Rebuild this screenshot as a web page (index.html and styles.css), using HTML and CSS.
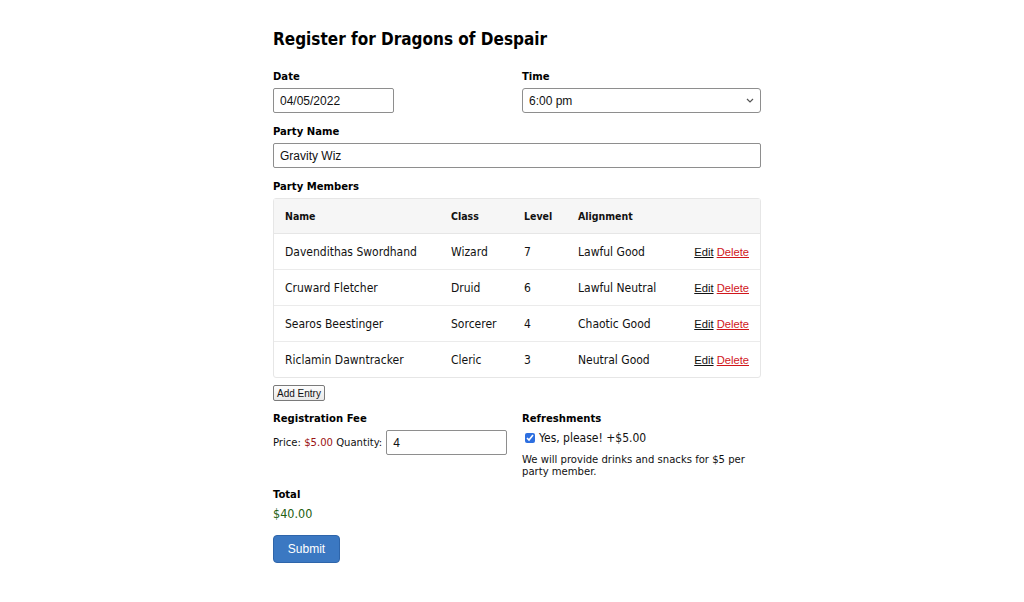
FILE: index.html
```html
<!DOCTYPE html>
<html lang="en">
<head>
<meta charset="utf-8">
<title>Register for Dragons of Despair</title>
<link rel="stylesheet" href="styles.css">
</head>
<body>
<form class="form">
  <h1 class="title">Register for Dragons of Despair</h1>

  <div class="row">
    <div class="field">
      <label class="label">Date</label>
      <input class="input input-short" type="text" value="04/05/2022">
    </div>
    <div class="field">
      <label class="label">Time</label>
      <div class="select-wrap">
        <select class="input select">
          <option>6:00 pm</option>
        </select>
        <svg class="chevron" width="8" height="5" viewBox="0 0 8 5"><path d="M1 1 L4 4 L7 1" fill="none" stroke="#555" stroke-width="1.2"/></svg>
      </div>
    </div>
  </div>

  <div class="field">
    <label class="label">Party Name</label>
    <input class="input" type="text" value="Gravity Wiz">
  </div>

  <div class="field">
    <label class="label">Party Members</label>
    <table class="members">
      <thead>
        <tr><th class="c-name">Name</th><th class="c-class">Class</th><th class="c-level">Level</th><th class="c-align">Alignment</th><th class="c-act"></th></tr>
      </thead>
      <tbody>
        <tr><td>Davendithas Swordhand</td><td>Wizard</td><td>7</td><td>Lawful Good</td><td class="c-act"><a class="edit" href="#">Edit</a> <a class="delete" href="#">Delete</a></td></tr>
        <tr><td>Cruward Fletcher</td><td>Druid</td><td>6</td><td>Lawful Neutral</td><td class="c-act"><a class="edit" href="#">Edit</a> <a class="delete" href="#">Delete</a></td></tr>
        <tr><td>Searos Beestinger</td><td>Sorcerer</td><td>4</td><td>Chaotic Good</td><td class="c-act"><a class="edit" href="#">Edit</a> <a class="delete" href="#">Delete</a></td></tr>
        <tr><td>Riclamin Dawntracker</td><td>Cleric</td><td>3</td><td>Neutral Good</td><td class="c-act"><a class="edit" href="#">Edit</a> <a class="delete" href="#">Delete</a></td></tr>
      </tbody>
    </table>
    <div class="add-row"><button type="button" class="add-btn">Add Entry</button></div>
  </div>

  <div class="row">
    <div class="field">
      <label class="label">Registration Fee</label>
      <div class="price-line">
        <span class="price-text">Price: <span class="price">$5.00</span> Quantity:</span>
        <input class="input input-short" type="text" value="4">
      </div>
    </div>
    <div class="field">
      <label class="label">Refreshments</label>
      <label class="check"><input type="checkbox" checked> <span>Yes, please! +$5.00</span></label>
      <p class="note">We will provide drinks and snacks for $5 per party member.</p>
    </div>
  </div>

  <div class="field total">
    <label class="label">Total</label>
    <div class="total-value">$40.00</div>
  </div>

  <button type="button" class="submit">Submit</button>
</form>
</body>
</html>
```

FILE: styles.css
```css
html, body {
  margin: 0;
  padding: 0;
  background: #fff;
}

body {
  font-family: "DejaVu Sans Condensed", "DejaVu Sans", sans-serif;
  font-stretch: condensed;
  color: #111;
  font-size: 12px;
}

.form {
  width: 488px;
  margin-left: 273px;
  padding-top: 28px;
  display: flex;
  flex-direction: column;
}

.title {
  font-size: 17px;
  font-weight: bold;
  line-height: 22px;
  margin: 0 0 18px 0;
  color: #000;
}

.row {
  display: grid;
  grid-template-columns: 234px 1fr;
  column-gap: 15px;
}

.field {
  display: flex;
  flex-direction: column;
  margin-bottom: 10px;
}

.label {
  font-weight: bold;
  font-size: 11.2px;
  line-height: 16px;
  margin-top: 1px;
  margin-bottom: 3px;
  color: #000;
}

.input {
  box-sizing: border-box;
  height: 25px;
  width: 100%;
  border: 1px solid #8e8e8e;
  border-radius: 2px;
  padding: 0 6px;
  font-family: "Liberation Sans", Arial, sans-serif;
  font-size: 12px;
  color: #111;
  background: #fff;
}

.input-short {
  width: 121px;
  flex-shrink: 0;
}

.select-wrap {
  position: relative;
}

.select {
  appearance: none;
  -webkit-appearance: none;
  border-radius: 3px;
}

.chevron {
  position: absolute;
  right: 7px;
  top: 10px;
}

.members {
  width: 100%;
  border-collapse: separate;
  border-spacing: 0;
  border: 1px solid #e6e6e6;
  border-radius: 3px;
  font-size: 12px;
}

.members th {
  background: #f6f6f6;
  font-weight: bold;
  font-size: 10.5px;
  text-align: left;
  height: 34px;
  padding: 0;
  border-bottom: 1px solid #e6e6e6;
}

.members td {
  height: 35px;
  padding: 0;
  border-bottom: 1px solid #ebebeb;
}

.members tbody tr:last-child td {
  border-bottom: none;
}

.members th:first-child,
.members td:first-child {
  padding-left: 11px;
}

.c-name { width: 166px; }
.c-class { width: 73px; }
.c-level { width: 54px; }
.c-align { width: 100px; }

.members .c-act {
  text-align: right;
  padding-right: 11px;
  font-family: "Liberation Sans", Arial, sans-serif;
  font-size: 11.2px;
  white-space: nowrap;
}

.edit {
  color: #111;
  text-decoration: underline;
}

.delete {
  color: #d0161b;
  text-decoration: underline;
}

.add-row {
  margin-top: 7px;
  margin-bottom: -1px;
}

.add-btn {
  font-family: "Liberation Sans", Arial, sans-serif;
  font-size: 10px;
  line-height: 13px;
  height: 16px;
  padding: 0 3px;
  border: 1px solid #7a7a7a;
  border-radius: 2px;
  background: linear-gradient(#fdfdfd, #e9e9e9);
  color: #111;
}

.price-line {
  display: flex;
  align-items: center;
  gap: 4px;
  font-size: 11.2px;
  white-space: nowrap;
}

.price {
  color: #9b1414;
}

.check {
  display: flex;
  align-items: center;
  gap: 4px;
  height: 14px;
  margin-top: 1px;
  padding-left: 3px;
  font-size: 12px;
}

.check input {
  width: 10px;
  height: 10px;
  margin: 0;
  accent-color: #2d6fe0;
}

.note {
  margin: 9px 0 0 0;
  font-size: 11.2px;
  line-height: 12px;
}

.total {
  margin-top: -2px;
  margin-bottom: 12px;
}

.total .label {
  margin-bottom: 3px;
}

.total-value {
  color: #236010;
  font-size: 12.5px;
  line-height: 16px;
}

.submit {
  align-self: flex-start;
  width: 67px;
  height: 28px;
  margin-top: 1px;
  background: #3b78c2;
  border: 1px solid #2e65aa;
  border-radius: 4px;
  color: #fff;
  font-family: "Liberation Sans", Arial, sans-serif;
  font-size: 12px;
}
```
